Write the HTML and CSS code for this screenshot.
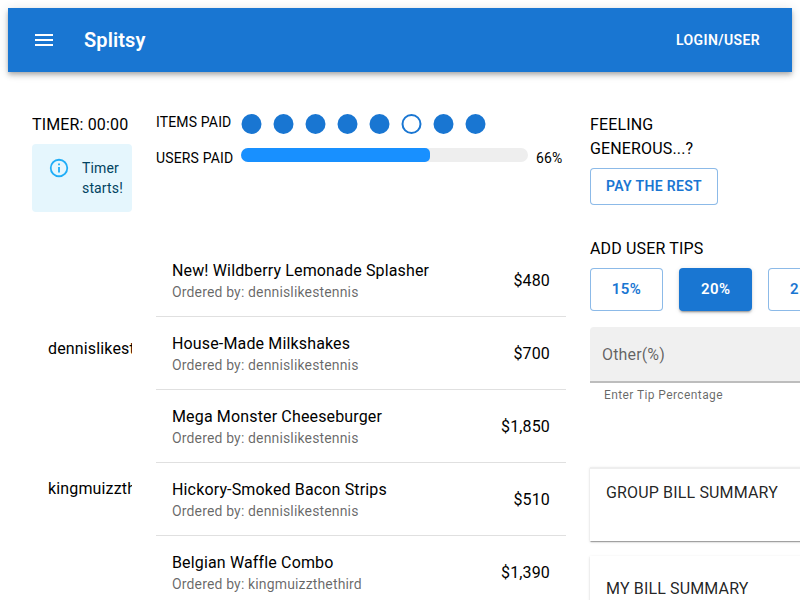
FILE: index.html
```html
<!DOCTYPE html>
<html lang="en">
<head>
<meta charset="utf-8">
<title>Splitsy</title>
<link rel="stylesheet" href="styles.css">
</head>
<body>
<header class="appbar">
  <svg class="menu" viewBox="0 0 24 24"><path d="M3 18h18v-2H3v2zm0-5h18v-2H3v2zm0-7v2h18V6H3z"/></svg>
  <div class="brand">Splitsy</div>
  <div class="login">LOGIN/USER</div>
</header>
<main class="layout">
  <section class="left">
    <div class="timer">TIMER: 00:00</div>
    <div class="alert">
      <svg class="info" viewBox="0 0 24 24"><path d="M11,7H13V9H11V7M11,11H13V17H11V11M12,2A10,10 0 0,0 2,12A10,10 0 0,0 12,22A10,10 0 0,0 22,12A10,10 0 0,0 12,2M12,20C7.58,20 4,16.42 4,12C4,7.59 7.59,4 12,4C16.41,4 20,7.58 20,12C20,16.42 16.42,20 12,20Z"/></svg>
      <div class="alert-text">Timer starts!</div>
    </div>
    <div class="users">
      <div class="user">dennislikestennis</div>
      <div class="user">kingmuizzthethird</div>
    </div>
  </section>
  <section class="middle">
    <div class="progress">
      <div class="row">
        <span class="label">ITEMS PAID</span>
        <svg class="dots" viewBox="0 0 250 24">
          <circle cx="10.5" cy="12" r="10"/><circle cx="42.5" cy="12" r="10"/><circle cx="74.5" cy="12" r="10"/><circle cx="106.5" cy="12" r="10"/><circle cx="138.5" cy="12" r="10"/><circle class="open" cx="170.5" cy="12" r="9"/><circle cx="202.5" cy="12" r="10"/><circle cx="234.5" cy="12" r="10"/>
        </svg>
      </div>
      <div class="row users-paid">
        <span class="label">USERS PAID</span>
        <div class="track"><div class="fill"></div></div>
        <span class="percent">66%</span>
      </div>
    </div>
    <ul class="items">
      <li class="item"><div><div class="name">New! Wildberry Lemonade Splasher</div><div class="by">Ordered by: dennislikestennis</div></div><div class="price">$480</div></li>
      <li class="item"><div><div class="name">House-Made Milkshakes</div><div class="by">Ordered by: dennislikestennis</div></div><div class="price">$700</div></li>
      <li class="item"><div><div class="name">Mega Monster Cheeseburger</div><div class="by">Ordered by: dennislikestennis</div></div><div class="price">$1,850</div></li>
      <li class="item"><div><div class="name">Hickory-Smoked Bacon Strips</div><div class="by">Ordered by: dennislikestennis</div></div><div class="price">$510</div></li>
      <li class="item"><div><div class="name">Belgian Waffle Combo</div><div class="by">Ordered by: kingmuizzthethird</div></div><div class="price">$1,390</div></li>
    </ul>
  </section>
  <section class="right">
    <div class="heading">FEELING GENEROUS...?</div>
    <button class="btn pay">PAY THE REST</button>
    <div class="heading tips-heading">ADD USER TIPS</div>
    <div class="tips">
      <button class="btn tip">15%</button>
      <button class="btn tip selected">20%</button>
      <button class="btn tip">25%</button>
    </div>
    <div class="field">Other(%)</div>
    <div class="helper">Enter Tip Percentage</div>
    <div class="card group">GROUP BILL SUMMARY</div>
    <div class="card mine">MY BILL SUMMARY</div>
  </section>
</main>
</body>
</html>
```
FILE: styles.css
```css
* { box-sizing: border-box; }
html { height: 600px; overflow: hidden; }
body {
  margin: 0;
  padding: 8px;
  height: 600px;
  overflow: hidden;
  background: #fff;
  color: rgba(0, 0, 0, 0.87);
  font: 400 16px/24px Roboto, sans-serif;
  letter-spacing: 0.15px;
}
.appbar {
  display: flex;
  align-items: center;
  height: 64px;
  padding: 0 32px 0 24px;
  background: #1976d2;
  color: #fff;
  box-shadow: 0 2px 4px -1px rgba(0,0,0,.2), 0 4px 5px 0 rgba(0,0,0,.14), 0 1px 10px 0 rgba(0,0,0,.12);
}
.menu { width: 24px; height: 24px; fill: currentColor; }
.brand { flex: 1; margin-left: 28px; font-size: 20px; font-weight: 600; line-height: 32px; letter-spacing: 0.1px; }
.login { font-size: 14px; font-weight: 600; letter-spacing: 0.38px; }
.layout {
  display: grid;
  grid-template-columns: 100px 410px 234px;
  column-gap: 24px;
  padding: 40px 0 0 24px;
  color: #000;
}
.left { min-width: 0; overflow: hidden; }
.timer { padding-top: 1px; white-space: nowrap; }
.alert {
  display: flex;
  height: 68px;
  margin-top: 7px;
  padding: 6px 0 6px 16px;
  border-radius: 4px;
  background: #e5f6fd;
  color: #014361;
  font-size: 14px;
  line-height: 20px;
}
.info { flex: none; width: 22px; height: 22px; margin: 7px 12px 0 0; fill: #1fadf7; }
.alert-text { padding-top: 8px; }
.users { padding: 125px 0 0 16px; }
.user { height: 140px; white-space: nowrap; }
.progress { height: 132px; }
.row { display: flex; height: 24px; }
.label { width: 85px; font-size: 14px; line-height: 20px; white-space: nowrap; }
.dots { width: 250px; height: 24px; fill: #1976d2; }
.dots .open { fill: #fff; stroke: #1976d2; stroke-width: 2; }
.users-paid { margin-top: 12px; }
.track { width: 287px; height: 14px; border-radius: 7px; background: #eee; overflow: hidden; }
.fill { width: 66%; height: 100%; border-radius: 0 5px 5px 0; background: #1890ff; }
.percent { margin-left: 8px; font-size: 14px; line-height: 20px; }
.items { margin: 0; padding: 0; list-style: none; }
.item {
  display: flex;
  align-items: center;
  justify-content: space-between;
  height: 73px;
  padding: 0 16px;
  border-bottom: 1px solid #e0e0e0;
}
.name { height: 24px; line-height: 26px; }
.by { color: rgba(0,0,0,.6); font-size: 14px; line-height: 20px; }
.price { padding-top: 2px; }
.heading { width: 130px; }
.right { padding-top: 1px; }
.btn {
  display: block;
  border: 1px solid rgba(25,118,210,.5);
  border-radius: 4px;
  padding: 0;
  background: #fff;
  color: #1976d2;
  font: 600 14px/24px Roboto, sans-serif;
  letter-spacing: 0.35px;
}
.pay { width: 128px; height: 36.5px; margin-top: 7px; padding-bottom: 1px; }
.tips-heading { margin-top: 32.5px; }
.tips { display: flex; gap: 16px; margin-top: 7px; }
.tip { flex: none; width: 73.2px; height: 42.5px; font-size: 15px; letter-spacing: 0.5px; }
.selected { border: 0; background: #1976d2; color: #fff; box-shadow: 0 3px 1px -2px rgba(0,0,0,.2), 0 2px 2px 0 rgba(0,0,0,.14), 0 1px 5px 0 rgba(0,0,0,.12); }
.field {
  height: 56px;
  margin-top: 16.5px;
  padding: 16px 12px;
  border-bottom: 2px solid #bdbdbd;
  border-radius: 4px 4px 0 0;
  background: #f0f0f0;
  color: rgba(0,0,0,.6);
}
.helper { margin: 2px 14px 0; color: rgba(0,0,0,.6); font-size: 12px; line-height: 20px; letter-spacing: 0.4px; }
.card {
  padding: 12px 16px;
  background: #fff;
  color: rgba(0, 0, 0, 0.87);
  box-shadow: 0 2px 1px -1px rgba(0,0,0,.2), 0 1px 1px 0 rgba(0,0,0,.14), 0 1px 3px 0 rgba(0,0,0,.12);
}
.group { height: 74px; margin-top: 62px; padding-top: 12px; border-top: 2px solid #eee; }
.mine { height: 120px; margin-top: 15px; padding-top: 21px; }
```
